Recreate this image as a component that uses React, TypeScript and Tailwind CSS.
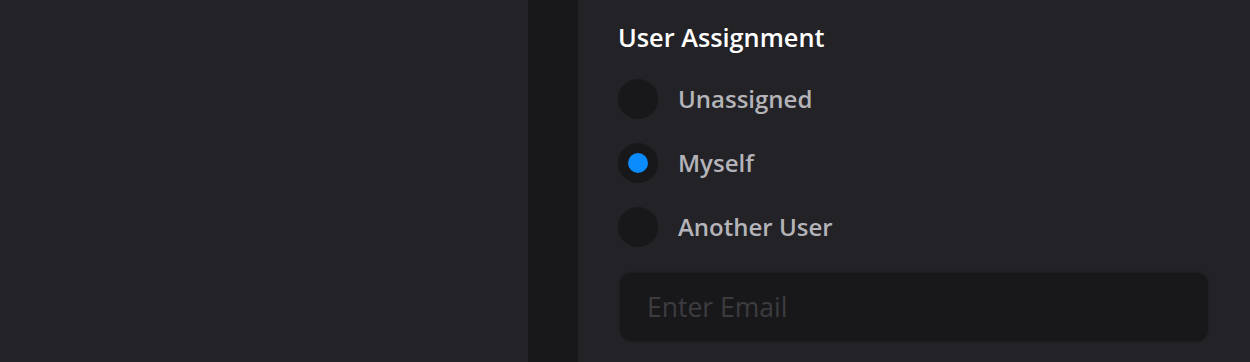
import React, { useState } from 'react';

const options = ['Unassigned', 'Myself', 'Another User'];

const App: React.FC = () => {
  const [selected, setSelected] = useState<string>('Myself');
  const [email, setEmail] = useState<string>('');

  return (
    <div
      className="flex h-screen w-full bg-[#222227]"
      style={{ fontFamily: '"Open Sans", "Noto Sans", sans-serif' }}
    >
      <div className="w-[528px] shrink-0 bg-[#222227]" />
      <div className="w-[50px] shrink-0 bg-[#18181a]" />
      <div className="flex flex-1 flex-col pl-[40px] pr-[42px] pt-[21px]">
        <h2 className="text-[25.3px] leading-[32px] font-semibold text-white">User Assignment</h2>
        <div className="mt-[26px] flex flex-col gap-[24px]">
          {options.map(opt => (
            <label key={opt} className="flex cursor-pointer items-center" onClick={() => setSelected(opt)}>
              <span className="flex h-[40px] w-[40px] items-center justify-center rounded-full bg-[#18181a]">
                {selected === opt && <span className="h-[20px] w-[20px] rounded-full bg-[#0a8cff]" />}
              </span>
              <span className="ml-[20px] text-[24px] font-semibold text-[#b4b4b8]">{opt}</span>
            </label>
          ))}
        </div>
        <input
          type="text"
          value={email}
          onChange={e => setEmail(e.target.value)}
          placeholder="Enter Email"
          className="mt-[26px] ml-[2px] h-[68px] w-[588px] rounded-[12px] bg-[#18181a] px-[27px] text-[26.5px] text-[#b4b4b8] shadow-[0_0_3px_rgba(0,0,0,0.35)] outline-none placeholder:text-[#3c3c40]"
        />
      </div>
    </div>
  );
};

export default App;
